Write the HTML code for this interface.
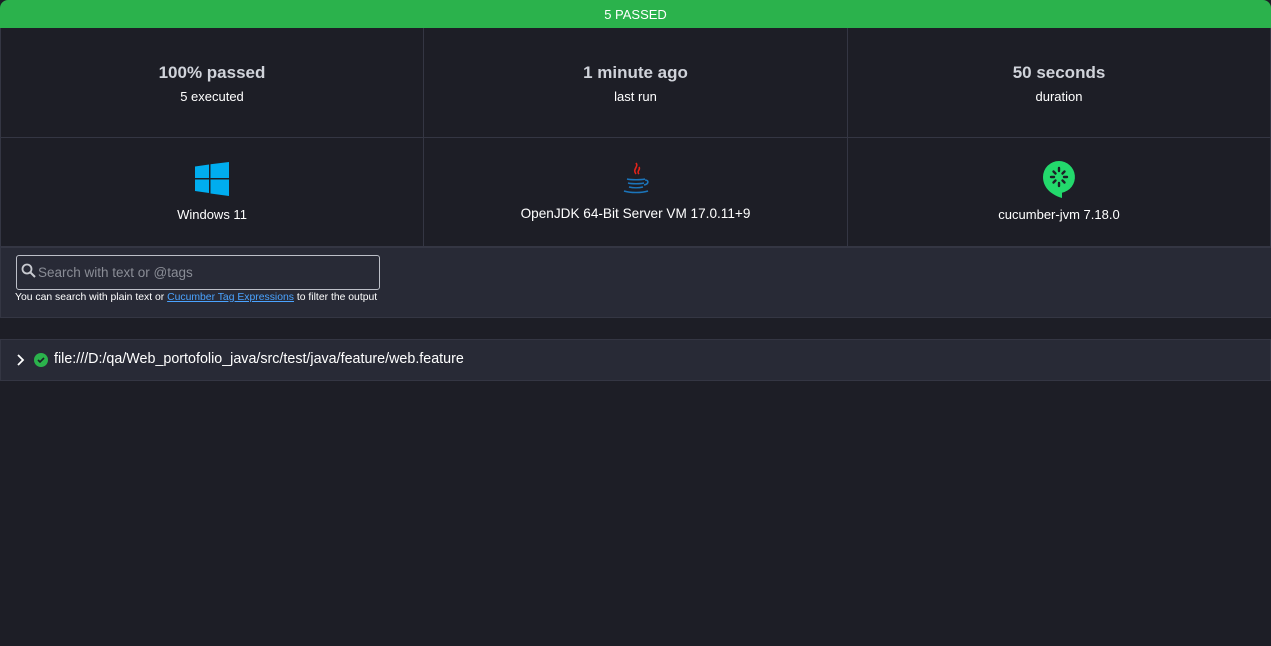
<!DOCTYPE html>
<html><head><style>
*{margin:0;padding:0;box-sizing:border-box}
body{width:1271px;height:646px;background:#1d1e26;font-family:"Liberation Sans",sans-serif;color:#fff;overflow:hidden;position:relative}
.bar{position:absolute;left:0;top:0;width:1271px;height:28px;background:#2bb24c;border-radius:8px 8px 0 0;text-align:center;font-size:13px;line-height:29px;color:#fff}
.cell{position:absolute;border-right:1px solid #343643;border-bottom:1px solid #343643;text-align:center}
.big{font-weight:bold;font-size:17px;color:#d0d3da}
.small{font-size:13px;color:#fff}
.search{position:absolute;left:0;top:247px;width:1271px;height:71px;background:#282a36;border-top:1px solid #343643;border-bottom:1px solid #343643;border-left:1px solid #343643}
.box{position:absolute;left:15px;top:7px;width:364px;height:35px;border:1px solid #bcbfc8;border-radius:3px}
.feat{position:absolute;left:0;top:339px;width:1271px;height:42px;background:#282a36;border:1px solid #343643}
</style></head><body>
<div class="bar">5 PASSED</div>
<div class="cell" style="left:0;top:28px;width:424px;height:110px;border-left:1px solid #343643"><div class="big" style="margin-top:35px">100% passed</div><div class="small" style="margin-top:6px">5 executed</div></div>
<div class="cell" style="left:424px;top:28px;width:424px;height:110px"><div class="big" style="margin-top:35px">1 minute ago</div><div class="small" style="margin-top:6px">last run</div></div>
<div class="cell" style="left:848px;top:28px;width:423px;height:110px"><div class="big" style="margin-top:35px">50 seconds</div><div class="small" style="margin-top:6px">duration</div></div>
<div class="cell" style="left:0;top:138px;width:424px;height:109px;border-left:1px solid #343643">
<svg width="36" height="36" viewBox="0 0 36 36" style="margin-top:23px"><path fill="#00adef" d="M1 5.5L15 3.5V17H1zM16.5 3.3L35 1V17H16.5zM1 18.5H15V32L1 30zM16.5 18.5H35V35L16.5 32.5z"/></svg>
<div class="small" style="margin-top:5px">Windows 11</div></div>
<div class="cell" style="left:424px;top:138px;width:424px;height:109px">
<svg width="30" height="36" viewBox="0 0 30 36" style="margin-top:23px"><path d="M15 2c3 4-4 6 0 11M18 6c2 3-3 4 0 7" stroke="#e2231a" stroke-width="1.6" fill="none"/><path d="M6 18c4 1 14 1 18 0M7 22c4 1 12 1 16 0M8 26c4 1 10 1 14 0M24 19c4 0 4 4-1 5M3 30c6 2 18 2 24 0" stroke="#1b75bb" stroke-width="1.6" fill="none"/></svg>
<div class="small" style="margin-top:4px;font-size:13.6px">OpenJDK 64-Bit Server VM 17.0.11+9</div></div>
<div class="cell" style="left:848px;top:138px;width:423px;height:109px">
<svg width="36" height="40" viewBox="0 0 36 40" style="margin-top:21px"><path fill="#23d96c" d="M18 2a16 16 0 0 1 3 31.7V39C8 35 2 27 2 18A16 16 0 0 1 18 2z"/><g stroke="#1d1e26" stroke-width="2.4" stroke-linecap="round"><path d="M18 9v3M18 24v3M10 18h3M23 18h3M12.5 12.5l2 2M21.5 21.5l2 2M23.5 12.5l-2 2M14.5 21.5l-2 2"/></g></svg>
<div class="small" style="margin-top:3px">cucumber-jvm 7.18.0</div></div>
<div class="search"><div class="box"><svg width="16" height="16" viewBox="0 0 16 16" style="position:absolute;left:4px;top:7px"><circle cx="6" cy="6" r="4.5" stroke="#c8cad0" stroke-width="1.8" fill="none"/><path d="M9.5 9.5L14 14" stroke="#c8cad0" stroke-width="2"/></svg><span style="position:absolute;left:21px;top:9px;font-size:13.5px;color:#8a8d96">Search with text or @tags</span></div>
<div style="position:absolute;left:14px;top:44px;font-size:10.4px;color:#fff">You can search with plain text or <span style="color:#4aa3ff;text-decoration:underline">Cucumber Tag Expressions</span> to filter the output</div></div>
<div class="feat"><svg width="10" height="12" viewBox="0 0 10 12" style="position:absolute;left:15px;top:14px"><path d="M2 1l5 5-5 5" stroke="#fff" stroke-width="1.8" fill="none"/></svg>
<svg width="14" height="14" viewBox="0 0 14 14" style="position:absolute;left:33px;top:13px"><circle cx="7" cy="7" r="7" fill="#2bb24c"/><path d="M4 7l2 2 4-4" stroke="#1d1e26" stroke-width="1.6" fill="none"/></svg>
<span style="position:absolute;left:53px;top:11px;font-size:14.3px">file:///D:/qa/Web_portofolio_java/src/test/java/feature/web.feature</span></div>
</body></html>
